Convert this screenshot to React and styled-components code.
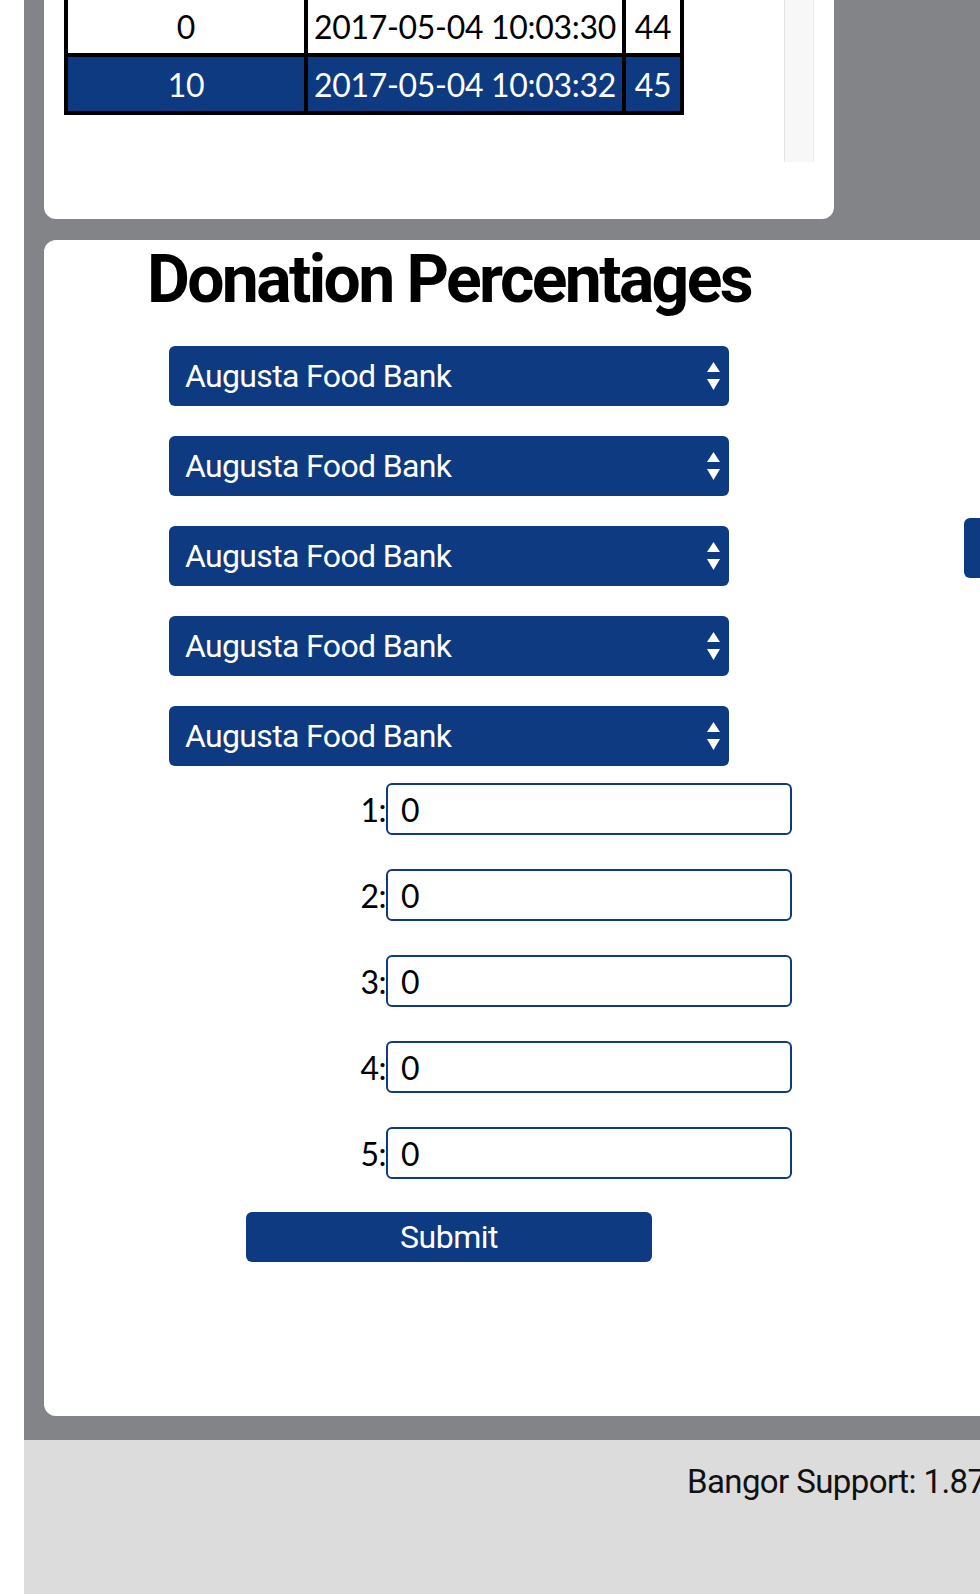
import React from "react";
import styled, { createGlobalStyle } from "styled-components";

const BLUE = "#0d3a80";

const GlobalStyle = createGlobalStyle`
  html, body {
    margin: 0;
    padding: 0;
    background: #ffffff;
    overflow: hidden;
  }
  * { box-sizing: border-box; }
`;

const Page = styled.div`
  width: 980px;
  height: 1594px;
  padding-left: 24px;
  background: #ffffff;
  display: flex;
  flex-direction: column;
  overflow: hidden;
`;

const Main = styled.main`
  background: #838488;
  padding: 0 0 24px 20px;
  display: flex;
  flex-direction: column;
  gap: 21px;
  overflow: hidden;
`;

const LogCard = styled.section`
  width: 790px;
  background: #ffffff;
  border-radius: 0 0 12px 12px;
  padding: 0 20px 57px 20px;
`;

const ScrollArea = styled.div`
  display: flex;
  justify-content: space-between;
  height: 162px;
`;

const ScrollTrack = styled.div`
  width: 30px;
  background: #f7f7f7;
  border-left: 1px solid #e3e3e3;
  border-right: 1px solid #ececec;
`;

const LogGrid = styled.div`
  align-self: flex-start;
  display: grid;
  grid-template-columns: 236px 314px 54px;
  grid-template-rows: 53px 54px;
  gap: 4px;
  padding: 0 4px 4px 4px;
  background: #000000;
`;

const LogCell = styled.div`
  display: flex;
  align-items: center;
  justify-content: center;
  background: ${(p) => (p.$selected ? BLUE : "#ffffff")};
  color: ${(p) => (p.$selected ? "#ffffff" : "#000000")};
  font-family: Lato, "Noto Sans", sans-serif;
  font-size: 32px;
  letter-spacing: -0.3px;
  white-space: nowrap;
`;

const DonationCard = styled.section`
  width: 1300px;
  flex-shrink: 0;
  background: #ffffff;
  border-radius: 12px;
  display: flex;
`;

const LeftColumn = styled.div`
  width: 810px;
  flex-shrink: 0;
  display: flex;
  flex-direction: column;
  align-items: center;
  padding-bottom: 154px;
`;

const Title = styled.h1`
  margin: 7px 0 0 0;
  font-family: Roboto, "Liberation Sans", sans-serif;
  font-weight: 700;
  font-size: 66px;
  line-height: 66px;
  letter-spacing: -2.6px;
  color: #000000;
  white-space: nowrap;
`;

const SelectList = styled.div`
  margin-top: 33px;
  display: flex;
  flex-direction: column;
  gap: 30px;
`;

const SelectWrap = styled.div`
  position: relative;
  width: 560px;
  height: 60px;
`;

const CharitySelect = styled.select`
  appearance: none;
  -webkit-appearance: none;
  width: 100%;
  height: 100%;
  margin: 0;
  border: none;
  border-radius: 6px;
  background: ${BLUE};
  color: #ffffff;
  font-family: Roboto, "Liberation Sans", sans-serif;
  font-size: 32px;
  letter-spacing: -0.65px;
  padding: 0 40px 0 16px;
  outline: none;
`;

const Arrows = styled.svg`
  position: absolute;
  right: 9px;
  top: 50%;
  transform: translateY(-50%);
  pointer-events: none;
`;

const AmountList = styled.div`
  align-self: flex-start;
  margin: 17px 0 0 302px;
  display: flex;
  flex-direction: column;
  gap: 34px;
`;

const AmountRow = styled.label`
  display: flex;
  align-items: center;
`;

const AmountLabel = styled.span`
  width: 40px;
  text-align: right;
  font-family: Lato, "Noto Sans", sans-serif;
  font-size: 32px;
  letter-spacing: -0.5px;
  color: #000000;
`;

const AmountInput = styled.input`
  width: 406px;
  height: 52px;
  margin: 0;
  border: 2px solid ${BLUE};
  border-radius: 6px;
  padding: 0 13px;
  background: #ffffff;
  font-family: Lato, "Noto Sans", sans-serif;
  font-size: 32px;
  color: #000000;
  outline: none;
`;

const SubmitButton = styled.button`
  margin-top: 33px;
  width: 406px;
  height: 50px;
  padding: 0;
  border: none;
  border-radius: 6px;
  background: ${BLUE};
  color: #ffffff;
  font-family: Roboto, "Liberation Sans", sans-serif;
  font-size: 32px;
  letter-spacing: -0.5px;
  cursor: pointer;
`;

const RightColumn = styled.div`
  padding: 278px 0 0 110px;
`;

const SideBox = styled.div`
  width: 300px;
  height: 60px;
  border-radius: 6px;
  background: ${BLUE};
`;

const Footer = styled.footer`
  flex: 1;
  background: #dcdcdc;
  padding: 25px 0 0 663px;
  font-family: Roboto, "Liberation Sans", sans-serif;
  font-size: 33px;
  line-height: 33px;
  letter-spacing: -0.6px;
  color: #111111;
  white-space: nowrap;
  overflow: hidden;
`;

const rows = [
  { id: "0", time: "2017-05-04 10:03:30", n: "44", selected: false },
  { id: "10", time: "2017-05-04 10:03:32", n: "45", selected: true },
];

const charities = [
  "Augusta Food Bank",
  "Bangor Area Homeless Shelter",
  "Good Shepherd Food Bank",
];

function SelectArrows() {
  return (
    <Arrows width="13" height="28" viewBox="0 0 13 28" aria-hidden="true">
      <polygon points="0,10 6.5,0 13,10" fill="#ffffff" />
      <polygon points="0,17 13,17 6.5,28" fill="#ffffff" />
    </Arrows>
  );
}

export default function App() {
  return (
    <>
      <GlobalStyle />
      <Page>
        <Main>
          <LogCard>
            <ScrollArea>
              <LogGrid>
                {rows.map((r) => (
                  <React.Fragment key={r.id}>
                    <LogCell $selected={r.selected}>{r.id}</LogCell>
                    <LogCell $selected={r.selected}>{r.time}</LogCell>
                    <LogCell $selected={r.selected}>{r.n}</LogCell>
                  </React.Fragment>
                ))}
              </LogGrid>
              <ScrollTrack />
            </ScrollArea>
          </LogCard>

          <DonationCard>
            <LeftColumn>
              <Title>Donation Percentages</Title>
              <SelectList>
                {[1, 2, 3, 4, 5].map((i) => (
                  <SelectWrap key={i}>
                    <CharitySelect defaultValue={charities[0]}>
                      {charities.map((c) => (
                        <option key={c} value={c}>
                          {c}
                        </option>
                      ))}
                    </CharitySelect>
                    <SelectArrows />
                  </SelectWrap>
                ))}
              </SelectList>
              <AmountList>
                {[1, 2, 3, 4, 5].map((i) => (
                  <AmountRow key={i}>
                    <AmountLabel>{i}:</AmountLabel>
                    <AmountInput type="text" defaultValue="0" />
                  </AmountRow>
                ))}
              </AmountList>
              <SubmitButton type="button">Submit</SubmitButton>
            </LeftColumn>
            <RightColumn>
              <SideBox />
            </RightColumn>
          </DonationCard>
        </Main>
        <Footer>Bangor Support: 1.875%</Footer>
      </Page>
    </>
  );
}
